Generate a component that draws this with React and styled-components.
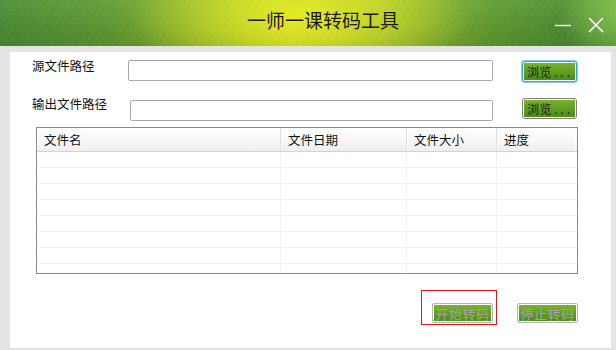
import styled, { createGlobalStyle } from "styled-components";

const Global = createGlobalStyle`
  body {
    margin: 0;
    font-family: "Noto Sans CJK SC", "Liberation Sans", sans-serif;
  }
`;

const Window = styled.div`
  width: 616px;
  height: 350px;
  background: #e4e4e4;
  display: flex;
  flex-direction: column;
  overflow: hidden;
`;

const TitleBar = styled.div`
  height: 46px;
  flex: none;
  display: flex;
  align-items: flex-start;
  background:
    repeating-linear-gradient(120deg, rgba(255,255,255,0.05) 0 1px, transparent 1px 6px),
    radial-gradient(ellipse 170px 60px at 300px 18px, rgba(232,236,36,0.9), rgba(232,236,36,0) 100%),
    radial-gradient(ellipse 60px 50px at 616px 10px, rgba(140,200,80,0.7), rgba(140,200,80,0) 100%),
    linear-gradient(180deg, rgba(255,255,255,0.06), rgba(0,0,0,0.1)),
    linear-gradient(90deg, #4a8d32 0%, #5f9c30 18%, #9cc028 36%, #c3d622 47%, #9ec22a 62%, #5f9c2e 80%, #4b8e2e 92%, #5ea23a 100%);
`;

const Title = styled.div`
  flex: 1;
  padding: 10px 0 0 247px;
  font-size: 19px;
  line-height: 20px;
  color: #1b1b10;
`;

const Controls = styled.div`
  display: flex;
  gap: 17px;
  padding: 17px 12px 0 0;
`;

const IconButton = styled.svg`
  width: 16px;
  height: 16px;
  display: block;
`;

const Content = styled.div`
  flex: 1;
  margin: 6px 5px 2px 10px;
  background: #fff;
`;

const FieldRow = styled.div`
  display: flex;
  align-items: flex-start;
  height: ${(p) => p.$height}px;
  padding-left: 22px;
`;

const Label = styled.div`
  width: ${(p) => p.$width}px;
  margin-top: ${(p) => p.$top}px;
  font-size: 12.5px;
  line-height: 13px;
  color: #111;
  flex: none;
`;

const PathInput = styled.div`
  width: ${(p) => p.$width}px;
  height: 21px;
  margin-top: ${(p) => p.$top}px;
  box-sizing: border-box;
  border: 1px solid #a9a9a9;
  border-radius: 2px;
  background: #fff;
  flex: none;
`;

const BrowseButton = styled.button`
  display: block;
  margin: ${(p) => p.$top}px 0 0 29px;
  width: 55px;
  height: ${(p) => p.$h}px;
  box-sizing: border-box;
  padding: 1px;
  border: ${(p) => (p.$focus ? "1px solid #2ea4e6" : "1px solid #7e7e7e")};
  box-shadow: ${(p) => (p.$focus ? "0 0 0 1px #7fd0f6" : "none")};
  border-radius: 3px;
  background: #fff;
  flex: none;
  cursor: pointer;
`;

const GreenFill = styled.span`
  display: flex;
  align-items: center;
  height: 100%;
  padding-left: ${(p) => p.$pad}px;
  justify-content: ${(p) => (p.$center ? "center" : "flex-start")};
  background: linear-gradient(180deg, #7ab32c 0%, #5f9c1e 55%, #4f8c16 100%);
  font-family: "Noto Sans CJK SC", sans-serif;
  font-size: ${(p) => p.$size}px;
  color: ${(p) => p.$color};
  letter-spacing: 0.5px;
`;

const Dots = styled.span`
  letter-spacing: 3px;
  margin-left: 2px;
`;

const Table = styled.div`
  margin: 6px 0 0 26px;
  width: 542px;
  height: 147px;
  box-sizing: border-box;
  border: 1px solid #8a8a8a;
  overflow: hidden;
`;

const Grid = styled.div`
  display: grid;
  grid-template-columns: 244px 126px 90px 78px 1fr;
`;

const HeadCell = styled.div`
  height: 23px;
  padding-left: 7px;
  display: flex;
  align-items: center;
  font-size: 12.5px;
  color: #111;
  background: linear-gradient(180deg, #ffffff 0%, #fafafa 40%, #efefef 100%);
  border-bottom: 1px solid #d2d2d2;
  border-right: ${(p) => (p.$last ? "none" : "1px solid #dcdcdc")};
  box-shadow: inset 1px 0 0 #fff;
`;

const BodyCell = styled.div`
  height: 15px;
  border-bottom: 1px solid #efefef;
  border-right: ${(p) => (p.$last ? "none" : "1px solid #f1f1f1")};
`;

const Footer = styled.div`
  display: flex;
  align-items: flex-start;
  padding: 16px 0 0 411px;
`;

const Highlight = styled.div`
  display: flex;
  align-items: flex-start;
  width: 76px;
  height: 35px;
  box-sizing: border-box;
  border: 1px solid #e8141a;
  padding: 12px 0 0 10px;
`;

const ActionButton = styled.button`
  display: block;
  width: 61px;
  height: 20px;
  margin-top: ${(p) => p.$top}px;
  margin-left: ${(p) => p.$left}px;
  box-sizing: border-box;
  padding: 1px;
  border: 1px solid #b4b4b4;
  border-radius: 2px;
  background: #fff;
  cursor: default;
`;

const columns = ["文件名", "文件日期", "文件大小", "进度", ""];
const rows = Array.from({ length: 8 });

export default function App() {
  return (
    <Window>
      <Global />
      <TitleBar>
        <Title>一师一课转码工具</Title>
        <Controls>
          <IconButton viewBox="0 0 16 16">
            <line x1="0" y1="8.5" x2="16" y2="8.5" stroke="#fff" strokeWidth="1.4" />
          </IconButton>
          <IconButton viewBox="0 0 16 16">
            <path d="M1 1 L15 15 M15 1 L1 15" stroke="#fff" strokeWidth="1.6" fill="none" />
          </IconButton>
        </Controls>
      </TitleBar>
      <Content>
        <FieldRow $height={38}>
          <Label $width={96} $top={7}>源文件路径</Label>
          <PathInput $width={365} $top={8} />
          <BrowseButton $top={9} $h={21} $focus>
            <GreenFill $pad={3} $size={12} $color="#1b1b10">
              浏览<Dots>...</Dots>
            </GreenFill>
          </BrowseButton>
        </FieldRow>
        <FieldRow $height={31}>
          <Label $width={98} $top={7}>输出文件路径</Label>
          <PathInput $width={363} $top={10} />
          <BrowseButton $top={8} $h={21}>
            <GreenFill $pad={3} $size={12} $color="#1b1b10">
              浏览<Dots>...</Dots>
            </GreenFill>
          </BrowseButton>
        </FieldRow>
        <Table>
          <Grid>
            {columns.map((c, i) => (
              <HeadCell key={i} $last={i >= 3}>{c}</HeadCell>
            ))}
            {rows.map((_, r) =>
              columns.map((c, i) => <BodyCell key={r + "-" + i} $last={i >= 3} />)
            )}
          </Grid>
        </Table>
        <Footer>
          <Highlight>
            <ActionButton $top={0} $left={0}>
              <GreenFill $pad={0} $center $size={13} $color="#a3a3a3">开始转码</GreenFill>
            </ActionButton>
          </Highlight>
          <ActionButton $top={13} $left={20}>
            <GreenFill $pad={0} $center $size={13} $color="#a3a3a3">停止转码</GreenFill>
          </ActionButton>
        </Footer>
      </Content>
    </Window>
  );
}
